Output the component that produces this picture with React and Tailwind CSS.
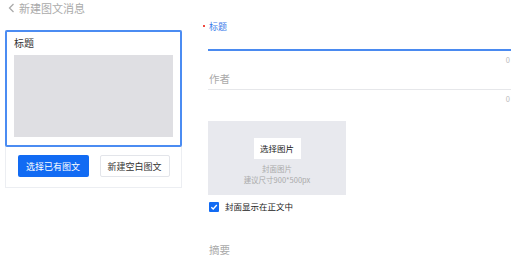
export default function App() {
  const font = { fontFamily: '"Noto Sans CJK SC", "Noto Sans", sans-serif' };
  return (
    <div style={font} className="w-[511px] h-[261px] overflow-hidden bg-white flex text-[#333]">
      <div className="w-[208px] shrink-0 pl-[5px] flex flex-col">
        <div className="h-[16px] flex items-center pl-[3px] text-[11px] leading-none text-[#aaa] gap-[4px]">
          <svg width="7" height="10" viewBox="0 0 7 10" fill="none" stroke="#aaa" strokeWidth="1.3">
            <path d="M5.5 1 L1.5 5 L5.5 9" />
          </svg>
          <span>新建图文消息</span>
        </div>
        <div className="mt-[14px] w-[177px] h-[158px] border border-[#eceef2] flex flex-col">
          <div className="-m-px border-2 border-[#4b8cf2] rounded-[2px] h-[117px] flex flex-col px-[7px]">
            <div className="h-[22px] pt-[5px] text-[10px] leading-[12px] text-[#333]">标题</div>
            <div className="mt-[1px] h-[82px] bg-[#dfdfe3]"></div>
          </div>
          <div className="flex justify-center gap-[11px] mt-[9px]">
            <div className="w-[71px] h-[22px] bg-[#126bf3] rounded-[2px] flex items-center justify-center text-white text-[9px] leading-none">选择已有图文</div>
            <div className="w-[70px] h-[22px] bg-white border border-[#e3e5ea] rounded-[2px] flex items-center justify-center text-[#333] text-[9px] leading-none">新建空白图文</div>
          </div>
        </div>
      </div>
      <div className="flex-1 flex flex-col">
        <div className="mt-[20px] h-[12px] flex items-center text-[9px] leading-none relative">
          <span className="absolute -left-[5px] top-[5px] w-[2px] h-[2px] bg-[#f0483e]"></span>
          <span className="ml-[1px] text-[#3a7bea]">标题</span>
        </div>
        <div className="mt-[17px] h-[2px] bg-[#4a8af0]"></div>
        <div className="h-[14px] flex items-center justify-end pr-[1px] text-[7.5px] text-[#bbb] leading-none mt-[2px]">0</div>
        <div className="mt-[7px] text-[10.5px] leading-none text-[#aaa] pl-[1px]">作者</div>
        <div className="mt-[4px] h-px bg-[#e6e7ea]"></div>
        <div className="h-[14px] flex items-center justify-end pr-[1px] text-[7.5px] text-[#bbb] leading-none mt-[2px]">0</div>
        <div className="mt-[15px] w-[138px] h-[74px] bg-[#e8e9ee] flex flex-col items-center">
          <div className="mt-[17px] w-[47px] h-[21px] bg-white flex items-center justify-center text-[8.5px] leading-none text-[#222]">选择图片</div>
          <div className="mt-[4px] text-[7.5px] leading-[11px] text-[#aaa]">封面图片</div>
          <div className="text-[7.5px] leading-[11px] text-[#aaa]">建议尺寸900*500px</div>
        </div>
        <div className="mt-[7px] flex items-center h-[10px] pl-[1px]">
          <div className="w-[10px] h-[10px] bg-[#126bf3] rounded-[1px] flex items-center justify-center">
            <svg width="8" height="8" viewBox="0 0 8 8" fill="none" stroke="white" strokeWidth="1.3">
              <path d="M1.3 4.2 L3.2 6 L6.8 2" />
            </svg>
          </div>
          <span className="ml-[6px] text-[8.5px] leading-none text-[#222]">封面显示在正文中</span>
        </div>
        <div className="mt-[33px] text-[10.5px] leading-none text-[#aaa] pl-[1px]">摘要</div>
      </div>
    </div>
  );
}
